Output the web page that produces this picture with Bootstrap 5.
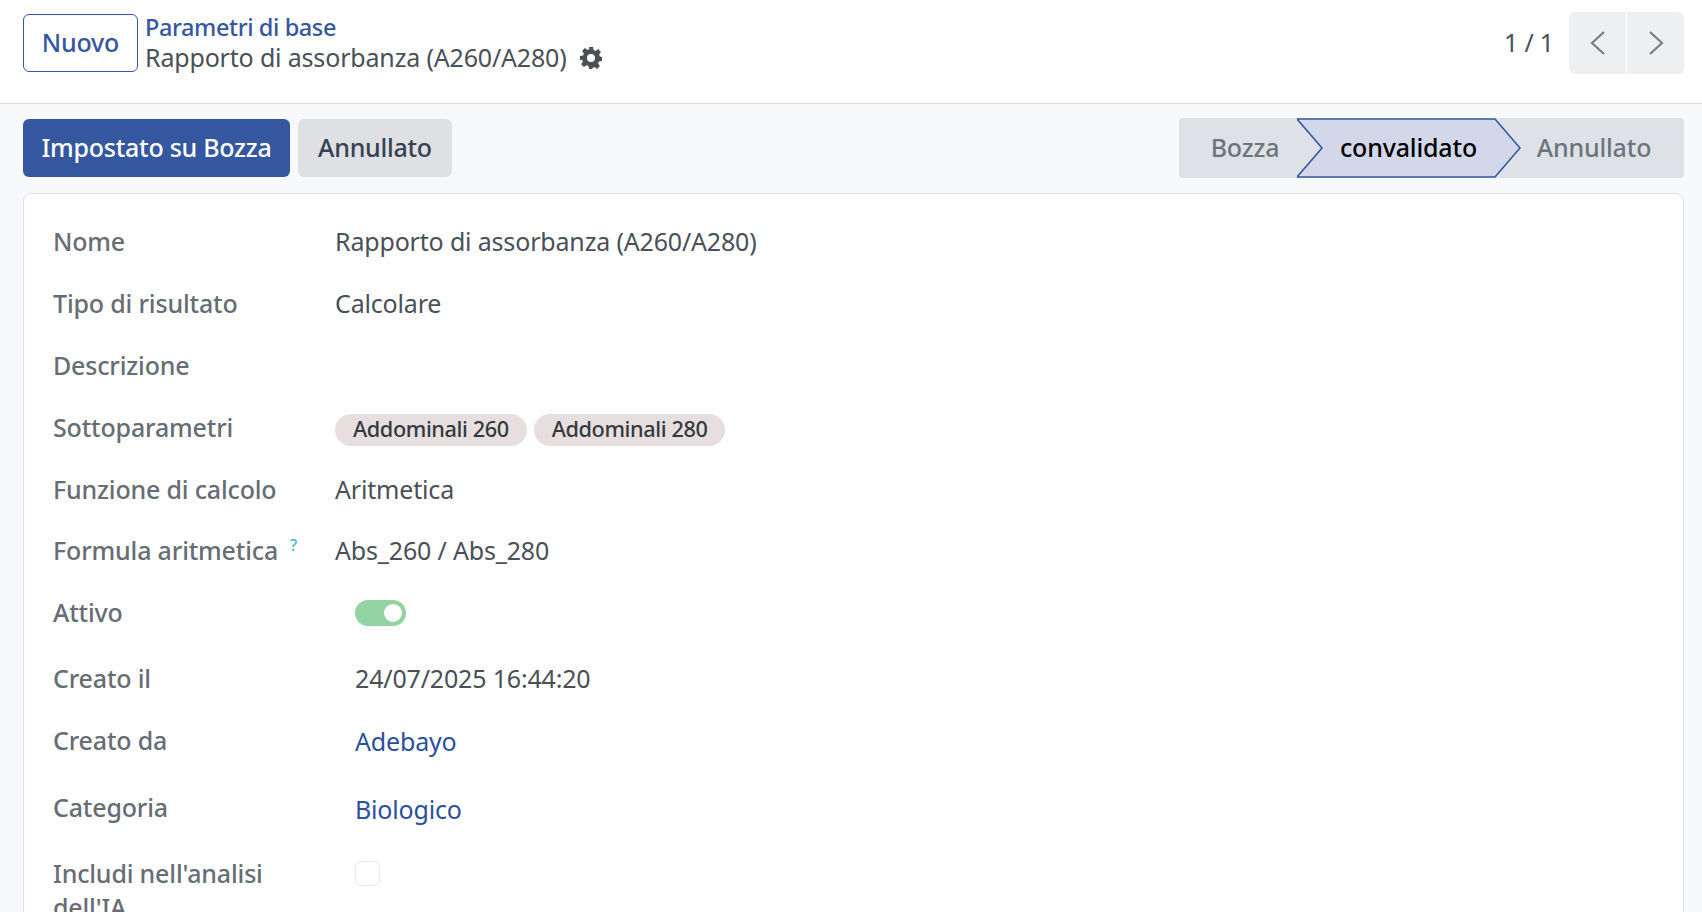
<!DOCTYPE html>
<html lang="it">
<head>
<meta charset="utf-8">
<title>Parametri di base</title>
<link rel="stylesheet" href="https://cdn.jsdelivr.net/npm/bootstrap@5.3.0/dist/css/bootstrap.min.css">
<style>
html,body{height:912px;overflow:hidden}
body{background:#f8f9fa;font-family:"Noto Sans",sans-serif;font-size:25px;color:#495057;letter-spacing:-.17px}
.topbar{height:104px;background:#fff;border-bottom:1px solid #d8dadd;padding:14px 18px 0 23px}
.btn-new{width:115px;height:58px;border:1px solid #35579f;border-radius:6px;color:#35579f;background:#fff;font-size:25px;font-weight:500;padding:0;letter-spacing:-.17px}
.crumbs{margin-left:7px;line-height:30px}
.crumb-link{color:#35579f;text-decoration:none;font-weight:500;display:block;height:28px;line-height:27px;font-size:23.5px;letter-spacing:-.4px}
.crumb-title{display:flex;align-items:center;gap:12px;line-height:31px}
.pager-text{margin-right:15px;line-height:57px}
.pager-group{width:115px;height:62px;margin-top:-2px;border-radius:6px;overflow:hidden;gap:1px}
.pager-btn{flex:1;background:#eeeff1;border:0;padding:0;display:flex;align-items:center;justify-content:center}
.actionbar{padding:15px 18px 15px 23px;height:89px}
.btn-odoo{height:58px;border:0;border-radius:6px;font-size:25px;font-weight:500;padding:0;letter-spacing:-.25px}
.btn-main{width:267px;background:#35579f;color:#fff}
.btn-grey{width:154px;background:#dee0e4;color:#374151;margin-left:8px}
.status-track{width:505px;height:60px;margin-top:-1px;background:#dee2e6;border-radius:4px;position:relative;font-weight:500;color:#6c757d}
.status-item{display:flex;align-items:center;justify-content:center;height:60px}
.st-one{width:118px;padding-left:14px}
.st-two{width:223px;color:#000}
.st-three{flex:1;padding-right:16px}
.status-arrow{position:absolute;left:118px;top:0;width:224px;height:60px}
.status-item span{position:relative}
.sheet{background:#fff;border:1px solid #dee2e6;border-radius:8px 8px 0 0;padding:17px 29px 0;height:725px;margin:0 18px 0 23px;overflow:hidden}
.field{display:grid;grid-template-columns:282px 1fr;align-items:center;height:62px}
.field-name{font-weight:500;color:#666d75}
.field-value{color:#495057}
.pad-value{padding-left:20px}
.tag-pill{display:inline-flex;align-items:center;height:32px;padding:0 18px;border-radius:16px;background:#e7dfdf;color:#343a40;font-size:21.7px;font-weight:500;margin-right:7px;letter-spacing:-.4px}
.help-mark{color:#3fb6c8;font-size:16px;vertical-align:super;margin-left:12px;font-weight:500}
.toggle-box{display:block;width:51px;height:26px;border-radius:13px;background:#93d2a1;position:relative}
.toggle-box::after{content:"";position:absolute;right:4px;top:4px;width:18px;height:18px;border-radius:50%;background:#fff}
.link-val{color:#2c4f9e;text-decoration:none}
.check-box{display:block;width:25px;height:25px;border:1px solid #e6e8ea;border-radius:6px;background:#fff}
.row-formula{height:60px}
.row-active{height:64px}
.row-created{height:68px}.row-by{height:56px}.row-cat{height:78px}
.row-by .field-value{padding-top:2px}.row-cat .field-value{padding-top:4px}
.field-tall{align-items:start;height:auto;padding-top:9px}
.wrap-label{line-height:34px;width:240px}
.field-tall .field-value{padding-top:5px}
</style>
</head>
<body>
<header class="topbar d-flex justify-content-between align-items-start">
  <div class="d-flex">
    <button class="btn-new" type="button">Nuovo</button>
    <div class="crumbs">
      <a class="crumb-link" href="#">Parametri di base</a>
      <div class="crumb-title">Rapporto di assorbanza (A260/A280)
        <svg width="24" height="24" viewBox="0 0 24 24" aria-hidden="true"><path fill="#495057" fill-rule="evenodd" d="M10 1h4l.6 3.1 1.9.8 2.6-1.8 2.8 2.8-1.8 2.6.8 1.9L23 11v4l-3.1.6-.8 1.9 1.8 2.6-2.8 2.8-2.6-1.8-1.9.8L13 23h-3l-.6-2.9-1.9-.8-2.6 1.8-2.8-2.8 1.8-2.6-.8-1.9L1 14v-4l3.1-.6.8-1.9-1.8-2.6 2.8-2.8 2.6 1.8 1.9-.8zM12 8a4 4 0 1 0 0 8 4 4 0 0 0 0-8z"/></svg>
      </div>
    </div>
  </div>
  <div class="d-flex">
    <span class="pager-text">1 / 1</span>
    <div class="pager-group d-flex">
      <button class="pager-btn" type="button" aria-label="Precedente"><svg width="18" height="28" viewBox="0 0 18 28"><path d="M15 3 3 14l12 11" fill="none" stroke="#7b7f84" stroke-width="2.2"/></svg></button>
      <button class="pager-btn" type="button" aria-label="Successivo"><svg width="18" height="28" viewBox="0 0 18 28"><path d="M3 3l12 11L3 25" fill="none" stroke="#7b7f84" stroke-width="2.2"/></svg></button>
    </div>
  </div>
</header>
<div class="actionbar d-flex justify-content-between align-items-start">
  <div class="d-flex">
    <button class="btn-odoo btn-main" type="button">Impostato su Bozza</button>
    <button class="btn-odoo btn-grey" type="button">Annullato</button>
  </div>
  <div class="status-track d-flex">
    <svg class="status-arrow" viewBox="0 0 224 60" aria-hidden="true"><path d="M0 1H198L223 30 198 59H0L25 30Z" fill="#d2d8e9" stroke="#35579f" stroke-width="1.6"/></svg>
    <div class="status-item st-one"><span>Bozza</span></div>
    <div class="status-item st-two"><span>convalidato</span></div>
    <div class="status-item st-three"><span>Annullato</span></div>
  </div>
</div>
<main class="sheet">
  <div class="field"><div class="field-name">Nome</div><div class="field-value">Rapporto di assorbanza (A260/A280)</div></div>
  <div class="field"><div class="field-name">Tipo di risultato</div><div class="field-value">Calcolare</div></div>
  <div class="field"><div class="field-name">Descrizione</div><div class="field-value"></div></div>
  <div class="field"><div class="field-name">Sottoparametri</div><div class="field-value"><span class="tag-pill">Addominali 260</span><span class="tag-pill">Addominali 280</span></div></div>
  <div class="field"><div class="field-name">Funzione di calcolo</div><div class="field-value">Aritmetica</div></div>
  <div class="field row-formula"><div class="field-name">Formula aritmetica<span class="help-mark">?</span></div><div class="field-value">Abs_260 / Abs_280</div></div>
  <div class="field row-active"><div class="field-name">Attivo</div><div class="field-value pad-value"><span class="toggle-box"></span></div></div>
  <div class="field row-created"><div class="field-name">Creato il</div><div class="field-value pad-value">24/07/2025 16:44:20</div></div>
  <div class="field row-by"><div class="field-name">Creato da</div><div class="field-value pad-value"><a class="link-val" href="#">Adebayo</a></div></div>
  <div class="field row-cat"><div class="field-name">Categoria</div><div class="field-value pad-value"><a class="link-val" href="#">Biologico</a></div></div>
  <div class="field field-tall"><div class="field-name wrap-label">Includi nell'analisi dell'IA</div><div class="field-value pad-value"><span class="check-box"></span></div></div>
</main>
</body>
</html>
